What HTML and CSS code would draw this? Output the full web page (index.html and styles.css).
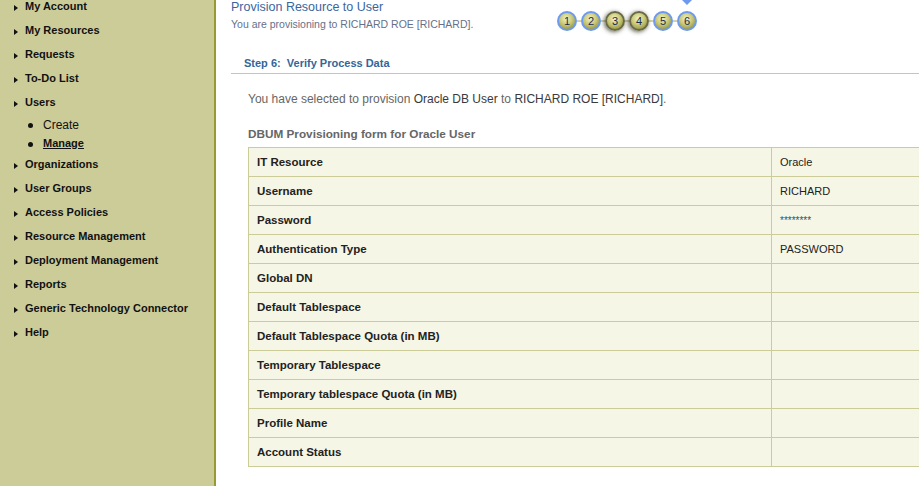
FILE: index.html
```html
<!DOCTYPE html>
<html lang="en">
<head>
    <meta charset="UTF-8">
    <title>Provision Resource to User</title>
    <link rel="stylesheet" href="styles.css">
</head>
<body>
    <div class="sidebar">
        <ul class="menu">
            <li><span class="arrow"></span>My Account</li>
            <li><span class="arrow"></span>My Resources</li>
            <li><span class="arrow"></span>Requests</li>
            <li><span class="arrow"></span>To-Do List</li>
            <li><span class="arrow"></span>Users</li>
            <li class="submenu">
                <div class="sub-item">Create</div>
                <div class="sub-item active"><a href="#">Manage</a></div>
            </li>
            <li><span class="arrow"></span>Organizations</li>
            <li><span class="arrow"></span>User Groups</li>
            <li><span class="arrow"></span>Access Policies</li>
            <li><span class="arrow"></span>Resource Management</li>
            <li><span class="arrow"></span>Deployment Management</li>
            <li><span class="arrow"></span>Reports</li>
            <li><span class="arrow"></span>Generic Technology Connector</li>
            <li><span class="arrow"></span>Help</li>
        </ul>
    </div>
    <div class="main">
        <div class="page-head">
            <div class="titles">
                <div class="title">Provision Resource to User</div>
                <div class="subtitle">You are provisioning to RICHARD ROE [RICHARD].</div>
            </div>
            <div class="steps">
                <span class="step">1</span><span class="link"></span>
                <span class="step">2</span><span class="link"></span>
                <span class="step dim">3</span><span class="link"></span>
                <span class="step dim">4</span><span class="link"></span>
                <span class="step">5</span><span class="link"></span>
                <span class="step current">6</span>
            </div>
        </div>
        <div class="step-title">Step 6:&nbsp; Verify Process Data</div>
        <div class="content">
            <p class="intro">You have selected to provision <b>Oracle DB User</b> to <b>RICHARD ROE [RICHARD]</b>.</p>
            <p class="form-title">DBUM Provisioning form for Oracle User</p>
            <table class="form-table">
                <tr><td class="label">IT Resource</td><td class="value">Oracle</td></tr>
                <tr><td class="label">Username</td><td class="value">RICHARD</td></tr>
                <tr><td class="label">Password</td><td class="value secret">********</td></tr>
                <tr><td class="label">Authentication Type</td><td class="value">PASSWORD</td></tr>
                <tr><td class="label">Global DN</td><td class="value"></td></tr>
                <tr><td class="label">Default Tablespace</td><td class="value"></td></tr>
                <tr><td class="label">Default Tablespace Quota (in MB)</td><td class="value"></td></tr>
                <tr><td class="label">Temporary Tablespace</td><td class="value"></td></tr>
                <tr><td class="label">Temporary tablespace Quota (in MB)</td><td class="value"></td></tr>
                <tr><td class="label">Profile Name</td><td class="value"></td></tr>
                <tr><td class="label">Account Status</td><td class="value"></td></tr>
            </table>
        </div>
    </div>
</body>
</html>
```

FILE: styles.css
```css
html, body {
    height: 100%;
}
body {
    margin: 0;
    font-family: "Liberation Sans", Arial, sans-serif;
    background: #fff;
    display: flex;
    overflow: hidden;
}
.sidebar {
    width: 214px;
    flex: none;
    background: #cccc99;
    border-right: 2px solid #999933;
    overflow: hidden;
}
.menu {
    list-style: none;
    margin: -6px 0 0 0;
    padding: 0;
}
.menu li {
    font-size: 11px;
    font-weight: bold;
    color: #111;
    line-height: 24px;
    padding-left: 14px;
}
.arrow {
    display: inline-block;
    width: 0;
    height: 0;
    border-left: 4px solid #111;
    border-top: 3px solid transparent;
    border-bottom: 3px solid transparent;
    margin-right: 7px;
    vertical-align: -1px;
}
.menu li.submenu {
    padding: 2px 0 0 0;
    line-height: 19px;
}
.sub-item {
    position: relative;
    padding-left: 43px;
    font-size: 12px;
    font-weight: normal;
}
.sub-item::before {
    content: "";
    position: absolute;
    left: 28px;
    top: 7px;
    width: 5px;
    height: 5px;
    border-radius: 50%;
    background: #111;
}
.sub-item.active {
    font-size: 11px;
    font-weight: bold;
    line-height: 17px;
}
.sub-item a {
    color: #111;
    text-decoration: underline;
}
.main {
    flex: 1;
    min-width: 0;
    overflow: hidden;
}
.page-head {
    display: flex;
    align-items: flex-start;
    padding-left: 15px;
}
.titles {
    width: 326px;
    flex: none;
}
.title {
    font-size: 12.5px;
    line-height: 15px;
    color: #3a66a0;
}
.subtitle {
    margin-top: 2px;
    font-size: 10.5px;
    line-height: 14px;
    color: #66708a;
}
.steps {
    display: flex;
    align-items: center;
    padding-top: 11px;
}
.step {
    position: relative;
    box-sizing: border-box;
    width: 20px;
    height: 20px;
    border-radius: 50%;
    border: 2px solid #6d9af0;
    background: radial-gradient(circle at 45% 35%, #f2f2c4 0%, #c9c978 45%, #7d7d28 100%);
    color: #1c2a4e;
    font-size: 11px;
    display: flex;
    align-items: center;
    justify-content: center;
}
.step.dim {
    border-color: #6a6a48;
    box-shadow: -1px 1px 4px 0 rgba(30, 30, 10, 0.7);
}
.step.current::before {
    content: "";
    position: absolute;
    top: -13px;
    left: 3px;
    border-left: 5px solid transparent;
    border-right: 5px solid transparent;
    border-top: 5px solid #6d9af0;
}
.link {
    width: 4px;
    height: 2px;
    background: #d6d2ae;
}
.step-title {
    margin: 25px 0 0 15px;
    padding: 0 0 3px 13px;
    font-size: 11px;
    font-weight: bold;
    line-height: 14px;
    color: #336699;
    border-bottom: 1px solid #c5cb9a;
}
.content {
    padding-left: 32px;
}
.intro {
    margin: 18px 0 0 0;
    font-size: 12px;
    line-height: 15px;
    color: #666;
}
.intro b {
    color: #3a3a3a;
    font-weight: normal;
}
.form-title {
    margin: 19px 0 0 0;
    font-size: 11.75px;
    font-weight: bold;
    line-height: 15px;
    color: #666;
}
.form-table {
    margin-top: 6px;
    width: 720px;
    border-collapse: collapse;
    background: #f6f6e6;
}
.form-table td {
    border: 1px solid #cccc99;
    height: 28px;
    padding: 0 8px;
    font-size: 11px;
    color: #222;
}
.form-table td.label {
    width: 506px;
    font-size: 11.5px;
    font-weight: bold;
}
.form-table td.secret {
    font-size: 10px;
    color: #2f4f7a;
}
```
